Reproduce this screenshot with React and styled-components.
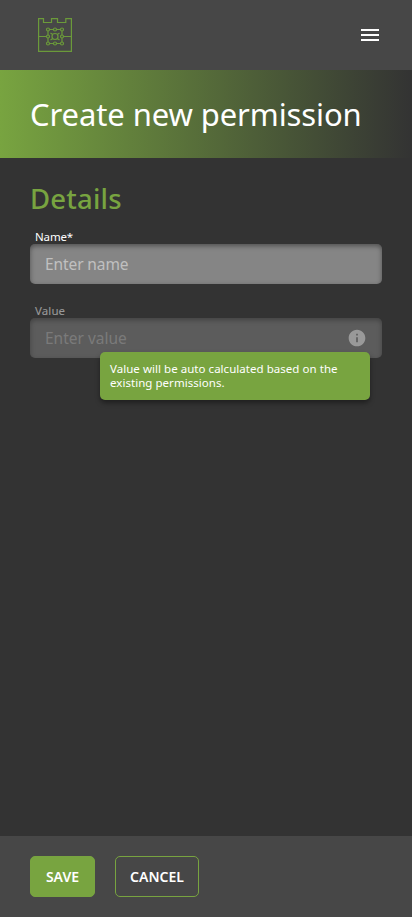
import React from 'react';
import styled, { createGlobalStyle } from 'styled-components';

const green = '#78a440';

const GlobalStyle = createGlobalStyle`
  * { box-sizing: border-box; }
  body { margin: 0; background: #333333; font-family: "Noto Sans", sans-serif; color: #fff; }
`;

const Page = styled.div`
  min-height: 100vh;
  display: flex;
  flex-direction: column;
`;

const Header = styled.header`
  height: 70px;
  background: #474747;
  display: flex;
  align-items: center;
  justify-content: space-between;
  padding: 0 30px 0 38px;
`;

const Logo = styled.svg`
  display: block;
  width: 34px;
  height: 34px;
  fill: none;
  stroke: #6b9a3a;
  stroke-width: 1.2;
`;

const MenuButton = styled.button`
  width: 24px;
  height: 24px;
  padding: 0;
  border: 0;
  background: none;
  color: #fff;
  svg { display: block; }
`;

const Banner = styled.div`
  height: 88px;
  padding: 0 30px;
  display: flex;
  align-items: center;
  background: linear-gradient(90deg, ${green}, #333333);
`;

const Title = styled.h1`
  margin: 0;
  font-size: 31px;
  line-height: 36px;
  font-weight: 400;
  letter-spacing: -0.1px;
  white-space: nowrap;
`;

const Content = styled.main`
  flex: 1;
  padding: 25px 30px;
`;

const SectionTitle = styled.h2`
  margin: 0 0 14px;
  font-size: 27.5px;
  line-height: 32px;
  font-weight: 500;
  letter-spacing: 0.2px;
  color: ${green};
`;

const Field = styled.div`
  position: relative;
  height: 74px;
`;

const FieldBody = styled.div`
  opacity: ${(p) => (p.$disabled ? 0.5 : 1)};
`;

const Label = styled.label`
  display: block;
  height: 15px;
  padding-left: 5px;
  font-size: 11.5px;
  line-height: 16px;
  letter-spacing: ${(p) => p.$spacing}px;
`;

const InputBox = styled.div`
  height: 40px;
  display: flex;
  align-items: center;
  padding: 0 15px;
  border-radius: 5px;
  background: #858585;
  box-shadow: inset 0 2px 5px rgba(0, 0, 0, 0.4);
`;

const Input = styled.input`
  flex: 1;
  min-width: 0;
  padding: 0;
  border: 0;
  outline: 0;
  background: none;
  color: #fff;
  font: 400 15.5px/20px "Noto Sans", sans-serif;
  letter-spacing: ${(p) => (p.disabled ? 0 : -0.1)}px;
  &::placeholder { color: #c0c0c0; opacity: 1; }
`;

const InfoIcon = styled.svg`
  width: 20px;
  height: 20px;
  fill: #fff;
`;

const Tooltip = styled.div`
  position: absolute;
  top: 49px;
  right: 12px;
  width: 270px;
  height: 48px;
  padding: 10px;
  border-radius: 5px;
  background: ${green};
  box-shadow: 0 3px 5px rgba(0, 0, 0, 0.4);
  font-size: 11.5px;
  line-height: 14px;
  letter-spacing: 0.04px;
  white-space: nowrap;
`;

const Footer = styled.footer`
  height: 81px;
  padding: 20px 30px;
  display: flex;
  gap: 20px;
  background: #474747;
`;

const Button = styled.button`
  width: ${(p) => p.$width}px;
  height: 41px;
  padding: 0;
  border: 1px solid ${green};
  border-radius: 5px;
  background: ${(p) => (p.$primary ? green : 'transparent')};
  color: #fff;
  font: 600 14px/16px "Noto Sans", sans-serif;
`;

export default function App() {
  return (
    <Page>
      <GlobalStyle />
      <Header>
        <Logo viewBox="0 0 34 34">
          <path d="M.6.6H5.5V4.5H13.5V.6H19.5V4.5H27.8V.6H33.4V33.4H.6Z" />
          <path d="M.6 18.5H8.5M25.5 18.5H33.4M10 11.5H24V25.5H10ZM12.5 15L14.7 16.5M21.5 15L19.3 16.5M12.5 22L14.7 20.5M21.5 22L19.3 20.5" />
          <g fill="#474747">
            <circle cx="17" cy="18.5" r="3" />
            <circle cx="10" cy="11.5" r="1.5" />
            <circle cx="17" cy="11.5" r="1.5" />
            <circle cx="24" cy="11.5" r="1.5" />
            <circle cx="10" cy="18.5" r="1.5" />
            <circle cx="24" cy="18.5" r="1.5" />
            <circle cx="10" cy="25.5" r="1.5" />
            <circle cx="17" cy="25.5" r="1.5" />
            <circle cx="24" cy="25.5" r="1.5" />
          </g>
        </Logo>
        <MenuButton aria-label="Menu">
          <svg width="24" height="24" viewBox="0 0 24 24" fill="currentColor">
            <path d="M3 18h18v-2H3v2zm0-5h18v-2H3v2zm0-7v2h18V6H3z" />
          </svg>
        </MenuButton>
      </Header>
      <Banner>
        <Title>Create new permission</Title>
      </Banner>
      <Content>
        <SectionTitle>Details</SectionTitle>
        <Field>
          <FieldBody>
            <Label htmlFor="name" $spacing={-0.15}>Name*</Label>
            <InputBox>
              <Input id="name" placeholder="Enter name" />
            </InputBox>
          </FieldBody>
        </Field>
        <Field>
          <FieldBody $disabled>
            <Label htmlFor="value" $spacing={0.1}>Value</Label>
            <InputBox>
              <Input id="value" placeholder="Enter value" disabled />
              <InfoIcon viewBox="0 0 24 24">
                <path d="M12 2C6.48 2 2 6.48 2 12s4.48 10 10 10 10-4.48 10-10S17.52 2 12 2zm1 15h-2v-6h2v6zm0-8h-2V7h2v2z" />
              </InfoIcon>
            </InputBox>
          </FieldBody>
          <Tooltip>
            Value will be auto calculated based on the
            <br />
            existing permissions.
          </Tooltip>
        </Field>
      </Content>
      <Footer>
        <Button $primary $width={65}>SAVE</Button>
        <Button $width={84}>CANCEL</Button>
      </Footer>
    </Page>
  );
}
